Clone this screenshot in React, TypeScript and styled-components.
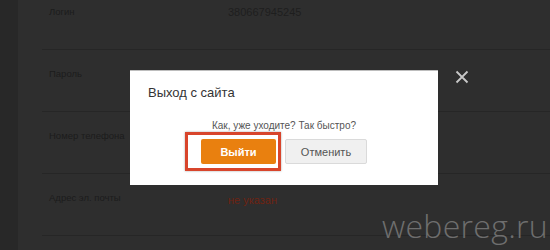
import styled, { createGlobalStyle } from 'styled-components';

const GlobalStyle = createGlobalStyle`
	html, body {
		margin: 0;
		padding: 0;
		background: #2e2e2e;
		font-family: "Liberation Sans", Arial, sans-serif;
	}
`;

const rows = [
	{ label: 'Логин', value: '380667945245', empty: false },
	{ label: 'Пароль', value: '', empty: false },
	{ label: 'Номер телефона', value: '', empty: false },
	{ label: 'Адрес эл. почты', value: 'не указан', empty: true },
];

const App = () => {
	return (
		<Page>
			<GlobalStyle />
			<Sidebar />
			<Content>
				<RowList>
					{rows.map((r) => (
						<Row key={r.label}>
							<Label>{r.label}</Label>
							<Value $empty={r.empty}>{r.value}</Value>
						</Row>
					))}
				</RowList>
			</Content>

			<Modal>
				<ModalTitle>Выход с сайта</ModalTitle>
				<ModalText>Как, уже уходите? Так быстро?</ModalText>
				<ButtonRow>
					<Highlight>
						<PrimaryButton>Выйти</PrimaryButton>
					</Highlight>
					<SecondaryButton>Отменить</SecondaryButton>
				</ButtonRow>
			</Modal>
			<CloseIcon viewBox="0 0 14 14">
				<path d="M1.5 1.5 L12.5 12.5 M12.5 1.5 L1.5 12.5" stroke="#c8c8c8" strokeWidth="1.8" />
			</CloseIcon>
			<Watermark>webereg.ru</Watermark>
		</Page>
	);
};

export default App;

const Page = styled.div`
	position: relative;
	width: 550px;
	height: 250px;
	overflow: hidden;
	display: flex;
	background: #2e2e2e;
`;

const Sidebar = styled.div`
	width: 18px;
	flex-shrink: 0;
	background: #282828;
`;

const Content = styled.div`
	flex: 1;
	padding-left: 24px;
`;

// строки профиля
const RowList = styled.div`
	margin-top: -12px;
	display: flex;
	flex-direction: column;
`;

const Row = styled.div`
	height: 62px;
	border-bottom: 1px solid #262626;
	display: flex;
	align-items: flex-start;
	padding-top: 17px;
	box-sizing: border-box;
`;

const Label = styled.div`
	width: 179px;
	padding-left: 7px;
	font-size: 9.5px;
	color: #1c1c1c;
	line-height: 14px;
`;

const Value = styled.div<{ $empty: boolean }>`
	font-size: 11px;
	line-height: 14px;
	color: ${(p) => (p.$empty ? '#6e2312' : '#1e1e1e')};
	margin-top: ${(p) => (p.$empty ? '2px' : '0')};
`;

// окно выхода
const Modal = styled.div`
	position: absolute;
	left: 130px;
	top: 70px;
	width: 308px;
	height: 115px;
	background: #ffffff;
	border-top: 1px solid #bdbdbd;
	box-sizing: border-box;
	display: flex;
	flex-direction: column;
`;

const ModalTitle = styled.div`
	padding: 14px 0 0 18px;
	font-size: 13px;
	line-height: 16px;
	color: #333;
`;

const ModalText = styled.div`
	margin-top: 19px;
	text-align: center;
	font-size: 10px;
	line-height: 12px;
	color: #555;
`;

const ButtonRow = styled.div`
	margin-top: 7px;
	display: flex;
	justify-content: center;
	gap: 9px;
`;

const Highlight = styled.div`
	position: relative;
	&::before {
		content: '';
		position: absolute;
		left: -16px;
		right: -5px;
		top: -7px;
		bottom: -7px;
		border: 3px solid #d8452c;
		box-shadow: 0 0 2px rgba(0, 0, 0, 0.35);
		box-sizing: border-box;
	}
`;

const PrimaryButton = styled.button`
	width: 75px;
	height: 25px;
	border: none;
	border-radius: 2px;
	background: #e9800f;
	color: #fff;
	font-family: inherit;
	font-weight: bold;
	font-size: 11px;
	padding: 0;
`;

const SecondaryButton = styled.button`
	width: 82px;
	height: 25px;
	border: 1px solid #dadada;
	border-radius: 2px;
	background: #f0f0f0;
	color: #555;
	font-family: inherit;
	font-size: 11px;
	padding: 0;
`;

const CloseIcon = styled.svg`
	position: absolute;
	left: 455px;
	top: 70px;
	width: 14px;
	height: 14px;
`;

const Watermark = styled.div`
	position: absolute;
	right: 2px;
	bottom: 3px;
	font-family: "Open Sans", sans-serif;
	font-weight: 300;
	font-size: 32px;
	letter-spacing: 0.3px;
	color: #6e6e6e;
`;
